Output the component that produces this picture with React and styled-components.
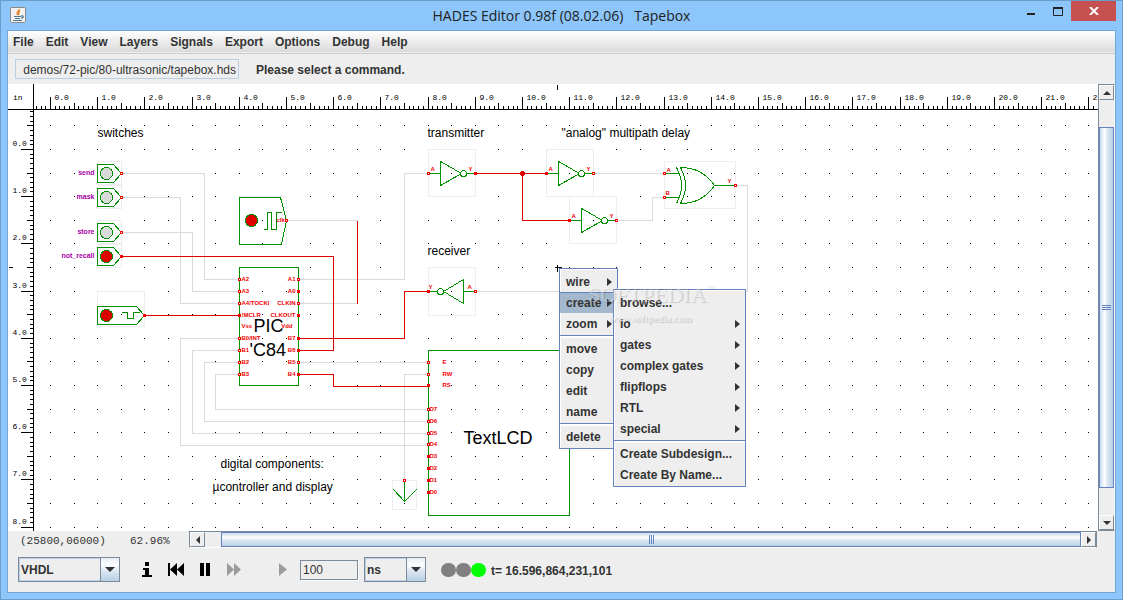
import React, { useEffect, useState } from 'react';
import styled, { createGlobalStyle } from 'styled-components';

const GlobalStyle = createGlobalStyle`
    * {
        box-sizing: border-box;
    }
    body {
        margin: 0;
        font-family: 'Liberation Sans', Arial, sans-serif;
        font-size: 12px;
        color: #333;
    }
    button, input, select {
        font: inherit;
        color: inherit;
        margin: 0;
        padding: 0;
        border: 0;
        background: none;
    }
`;

const Frame = styled.div`
    display: flex;
    flex-direction: column;
    height: 100vh;
    padding: 0 6px 6px;
    border: 1px solid #6b9dc9;
    background: #8cc6fa;
`;

const TitleBar = styled.header`
    display: grid;
    grid-template-columns: 1fr auto 1fr;
    height: 29px;
    flex: none;
`;

const AppIcon = styled.svg`
    margin: 6px 0 0 3px;
`;

const Title = styled.h1`
    margin: 0;
    font: 14px/30px 'Open Sans', sans-serif;
    color: #222;
    white-space: pre;
`;

const WindowButtons = styled.div`
    display: flex;
    justify-content: flex-end;
    align-items: flex-start;
`;

const WindowButton = styled.button`
    display: flex;
    width: ${(props) => (props.$close ? 45 : 27)}px;
    height: 20px;
    align-items: center;
    justify-content: center;
    background: ${(props) => (props.$close ? '#c75050' : 'transparent')};
`;

const Client = styled.main`
    display: flex;
    flex-direction: column;
    flex: 1;
    min-height: 0;
    border: 1px solid #74a5d4;
    background: #eee;
`;

const MenuBar = styled.nav`
    display: flex;
    flex: none;
    gap: 12px;
    height: 23px;
    padding-left: 5px;
    border-bottom: 1px solid #ccc;
    background: linear-gradient(#fff, #dadada 21px, #eee 21px);
`;

const MenuButton = styled.button`
    font-weight: bold;
    line-height: 21px;
`;

const MessageBar = styled.div`
    display: flex;
    flex: none;
    align-items: center;
    height: 30px;
    gap: 17px;
    padding-left: 7px;
    font-weight: bold;

    span {
        padding-top: 1px;
    }
`;

const PathInput = styled.input`
    width: 224px;
    height: 20px;
    padding: 1px 2px 0;
    border: 1px solid #b8cfe5;
    font-weight: normal;
    text-align: right;
`;

const Workspace = styled.div`
    display: flex;
    flex: 1;
    min-height: 0;
`;

const Sheet = styled.section`
    position: relative;
    display: grid;
    flex: 1;
    min-width: 0;
    grid-template: 26px 1fr / 26px 1fr;
    background: #fff;
    overflow: hidden;
`;

const Corner = styled.div`
    padding: 8px 0 0 5px;
    border-right: 1px solid #000;
    border-bottom: 1px solid #000;
    font: 8px/12px 'Liberation Mono', monospace;
    color: #000;
`;

const Drawing = styled.svg`
    display: block;
    width: 100%;
    height: 100%;
    min-width: 0;
    min-height: 0;
    overflow: hidden;
    fill: none;
    stroke-width: 1;
    shape-rendering: crispEdges;

    text {
        stroke: none;
    }
`;

const RulerText = styled.text`
    font: 8px 'Liberation Mono', monospace;
    fill: #000;
`;

const NoteText = styled.text`
    font-size: ${(props) => (props.$big ? 18 : 12)}px;
    fill: #000;
`;

const PinText = styled.text`
    font-size: 6px;
    font-weight: bold;
    fill: #f00000;
`;

const SignalText = styled.text`
    font-size: 7px;
    font-weight: bold;
    fill: #a800a8;
    text-anchor: end;
`;

const Menu = styled.ul`
    position: absolute;
    left: ${(props) => props.$x}px;
    top: ${(props) => props.$y}px;
    width: ${(props) => props.$w}px;
    margin: 0;
    padding: 2px 0 1px;
    list-style: none;
    border: 1px solid #6382bf;
    background: #eee;
    box-shadow: inset 1px 1px #fff;
`;

const MenuItem = styled.li`
    height: 21px;
    background: ${(props) => (props.$active ? '#a3b8cc' : 'transparent')};
    border-top: 1px solid ${(props) => (props.$active ? '#6382bf' : 'transparent')};

    button {
        display: flex;
        width: 100%;
        height: 19px;
        align-items: center;
        justify-content: space-between;
        padding: 0 5px 0 6px;
        font-weight: bold;
    }
`;

const MenuLine = styled.li`
    height: 4px;
    padding-top: 1px;

    &::before {
        content: '';
        display: block;
        height: 2px;
        border-top: 1px solid #6382bf;
        background: #fff;
    }
`;

const Watermark = styled.div`
    position: absolute;
    left: 580px;
    top: 197px;
    font: 22px/28px 'Liberation Serif', serif;
    color: rgba(255, 255, 255, 0.4);
    text-shadow: 1px 1px 1px rgba(0, 0, 0, 0.16);
    pointer-events: none;

    sup {
        font-size: 8px;
        line-height: 8px;
        vertical-align: 12px;
    }
    small {
        display: block;
        padding-left: 21px;
        font: bold 10px/20px 'Liberation Serif', serif;
    }
`;

const ScrollBar = styled.div`
    display: flex;
    flex: ${(props) => (props.$vertical ? 'none' : '1')};
    flex-direction: ${(props) => (props.$vertical ? 'column' : 'row')};
    width: ${(props) => (props.$vertical ? '17px' : 'auto')};
    height: ${(props) => (props.$vertical ? 'auto' : '17px')};
    margin-right: ${(props) => (props.$vertical ? 0 : 18)}px;
    border: 1px solid #7a8a99;
    border-right-color: ${(props) => (props.$vertical ? '#fff' : '#7a8a99')};
    border-bottom-color: ${(props) => (props.$vertical ? '#7a8a99' : '#fff')};
    background: #eee;
`;

const ScrollButton = styled.button`
    display: flex;
    flex: none;
    width: 15px;
    height: 15px;
    align-items: center;
    justify-content: center;
    border: 1px solid #7a8a99;
    border-top-color: #fff;
    border-left-color: #fff;
`;

const ScrollTrack = styled.div`
    display: flex;
    flex: 1;
    min-width: 0;
    min-height: 0;
    flex-direction: inherit;
    padding: ${(props) => (props.$vertical ? '27px 0' : '0 0 0 16px')};
`;

const ScrollThumb = styled.div`
    display: flex;
    flex: 1;
    align-items: center;
    justify-content: center;
    border: 1px solid #6382bf;
    background: linear-gradient(
        ${(props) => (props.$vertical ? '90deg' : '180deg')},
        #c8dcf0,
        #fff 35%,
        #dde8f3 55%,
        #b8cfe5
    );
`;

const StatusRow = styled.div`
    display: flex;
    flex: none;
    height: 17px;
    font: 11px/20px 'Liberation Mono', monospace;
`;

const Coordinates = styled.output`
    width: 110px;
    margin-left: 12px;
`;

const ZoomLevel = styled.output`
    width: 59px;
`;

const ControlBar = styled.footer`
    display: flex;
    flex: none;
    align-items: center;
    height: 44px;
    padding: 0 10px 1px;
    font-weight: bold;
`;

const Combo = styled.div`
    position: relative;
    width: ${(props) => props.$w}px;
    height: 25px;

    select {
        width: 100%;
        height: 100%;
        padding: 1px 20px 0 2px;
        appearance: none;
        border: 1px solid #7a8a99;
        box-shadow: inset 0 0 0 1px #b8cfe5;
        font-weight: bold;
    }
    svg {
        position: absolute;
        top: 1px;
        right: 1px;
        border-left: 1px solid #7a8a99;
        background: linear-gradient(#e4edf6, #fff 30%, #dde8f3 55%, #b8cfe5);
        pointer-events: none;
    }
`;

const Transport = styled.div`
    display: flex;
    margin: 0 3px 0 12px;
`;

const TransportButton = styled.button`
    display: flex;
    width: 29px;
    height: 24px;
    align-items: center;
    justify-content: center;
    color: ${(props) => (props.disabled ? '#9c9c9c' : '#000')};
    margin-left: ${(props) => (props.$apart ? 20 : 0)}px;
`;

const StepInput = styled.input`
    width: 58px;
    height: 20px;
    margin-right: 6px;
    padding: 0 2px;
    border: 1px solid #7a8a99;
    box-shadow: 1px 1px #fff;
    font-weight: normal;
`;

const Lights = styled.div`
    display: flex;
    margin: 0 5px 0 15px;
    padding-top: 1px;
`;

const Light = styled.span`
    width: 15px;
    height: 14px;
    border-radius: 7px;
    background: ${(props) => (props.$on ? '#0f0' : '#808080')};
`;

const SimTime = styled.output`
    padding-top: 2px;
`;

const GREEN = '#009000';
const RED = '#e00000';
const GREY = '#dadada';
const PALE = '#eee';

// one inch on the rulers, at 62.96% zoom
const INCH = 47.2;
const ORIGIN_X = 50;
const ORIGIN_Y = 149;

const at = (origin, inches) => Math.round(origin + inches * INCH);

const steps = (from, count) => Array.from({ length: count }, (_, i) => from + i);

const isHalf = (i) => i % 5 === 0;

// how many whole inches of the sheet the window shows
const visibleInches = () => ({
    across: Math.max(1, Math.ceil((window.innerWidth - 75) / INCH)),
    down: Math.max(1, Math.ceil((window.innerHeight - 219) / INCH)),
});

function TopRuler({ inches }) {
    const tick = (i) => {
        const top = i % 10 === 0 ? 96 : isHalf(i) ? 102 : 105;
        return `M${at(ORIGIN_X, i / 10)} ${top}V109`;
    };
    return (
        <Drawing aria-hidden="true">
            <g transform="translate(-33.5 -83.5)">
                <path
                    stroke="#000"
                    d={`M0 109H4000M557 84V89${steps(-3, inches * 10 + 3).map(tick).join('')}`}
                />
                {steps(0, inches).map((n) => (
                    <RulerText key={n} x={at(ORIGIN_X, n) + 4} y="99">
                        {n}.0
                    </RulerText>
                ))}
            </g>
        </Drawing>
    );
}

function LeftRuler({ inches }) {
    const tick = (i) => {
        const left = i % 10 === 0 ? 20 : isHalf(i) ? 26 : 29;
        return `M${left} ${at(ORIGIN_Y, i / 10)}H33`;
    };
    return (
        <Drawing aria-hidden="true">
            <g transform="translate(-7.5 -109.5)">
                <path
                    stroke="#000"
                    d={`M33 0V3000M8 267H12${steps(-8, inches * 10 + 8).map(tick).join('')}`}
                />
                {steps(0, inches).map((n) => (
                    <RulerText key={n} x="12" y={at(ORIGIN_Y, n) - 4}>
                        {n}.0
                    </RulerText>
                ))}
            </g>
        </Drawing>
    );
}

function Pin({ x, y, on }) {
    return (
        <rect
            x={x - 1}
            y={y - 1}
            width="2"
            height="2"
            stroke="#f00000"
            fill={on ? '#f00000' : '#fff'}
        />
    );
}

function Switch({ y, name, on }) {
    return (
        <g>
            <rect x="97" y={y - 12} width="24" height="23" stroke={PALE} />
            <path d={`M97 ${y - 9}H113L121 ${y}L113 ${y + 9}H97Z`} stroke={GREEN} />
            <circle cx="106" cy={y} r="6" stroke={GREEN} fill={on ? RED : GREY} />
            <SignalText x="94" y={y + 1}>
                {name}
            </SignalText>
            <Pin x={121} y={y} on={on} />
        </g>
    );
}

function Inverter({ x, y, on }) {
    return (
        <g transform={`translate(${x} ${y})`}>
            <rect x="0" y="-24" width="47" height="47" stroke={PALE} />
            <path d="M1 0H12M12 -12V12L33 0ZM38 0H47" stroke={GREEN} />
            <circle cx="35" cy="0" r="3" stroke={GREEN} fill="#fff" />
            <PinText x="2" y="-3">
                A
            </PinText>
            <PinText x="40" y="-3">
                Y
            </PinText>
            <Pin x={0} y={0} on={on} />
            <Pin x={47} y={0} on={x === 428} />
        </g>
    );
}

const greyWires = [
    'M122 173H204V279H238',
    'M122 197H180V303H238',
    'M122 232H192V291H238',
    'M287 220H357M357 303H299',
    'M299 279H404V173H428',
    'M299 362H428',
    'M428 374H404V480',
    'M238 338H180V445H428',
    'M238 350H192V433H428',
    'M238 362H204V421H428',
    'M238 374H215V409H428',
    'M594 173H664',
    'M618 220H652V197H664',
    'M736 185H747V291H476',
];

const redWires = [
    'M122 256H333V350H299',
    'M145 315H239',
    'M357 220V303',
    'M299 338H404V291H428',
    'M299 374H333V386H428',
    'M476 173H546',
    'M522 173V220H569',
];

const picPins = [
    { y: 279, left: 'A2', right: 'A1' },
    { y: 291, left: 'A3', right: 'A0', rightOn: true },
    { y: 303, left: 'A4/TOCKI', right: 'CLKIN' },
    { y: 315, left: '!MCLR', right: 'CLKOUT', leftOn: true, rightOn: true },
    { y: 326, left: 'Vss', right: 'Vdd', power: true },
    { y: 338, left: 'B0/INT', right: 'B7', rightOn: true },
    { y: 350, left: 'B1', right: 'B6', rightOn: true },
    { y: 362, left: 'B2', right: 'B5' },
    { y: 374, left: 'B3', right: 'B4', rightOn: true },
];

const lcdPins = [
    { y: 362, name: 'E', x: 442 },
    { y: 374, name: 'RW', x: 442 },
    { y: 385, name: 'RS', x: 442, on: true },
    { y: 409, name: 'D7' },
    { y: 421, name: 'D6' },
    { y: 433, name: 'D5' },
    { y: 444, name: 'D4' },
    { y: 456, name: 'D3', on: true },
    { y: 468, name: 'D2', on: true },
    { y: 480, name: 'D1', on: true },
    { y: 492, name: 'D0', on: true },
];

const notes = [
    { x: 97, y: 136, text: 'switches' },
    { x: 427, y: 136, text: 'transmitter' },
    { x: 561, y: 136, text: '"analog" multipath delay' },
    { x: 427, y: 254, text: 'receiver' },
    { x: 220, y: 467, text: 'digital components:' },
    { x: 212, y: 490, text: 'µcontroller and display' },
    { x: 253, y: 331, text: 'PIC', big: true },
    { x: 249, y: 355, text: "'C84", big: true },
    { x: 463, y: 443, text: 'TextLCD', big: true },
];

const gridDots = steps(0, 90)
    .map((i) =>
        steps(-1, 50)
            .map((j) => `M${at(ORIGIN_X, i / 2) - 0.5} ${at(ORIGIN_Y, j / 2)}h1`)
            .join('')
    )
    .join('');

function Schematic() {
    return (
        <Drawing role="img" aria-label="Tapebox schematic">
            <g transform="translate(-33.5 -109.5)">
                <path d={gridDots} stroke="#000" />
                <path d={greyWires.join('')} stroke={GREY} />
                <path d={redWires.join('')} stroke={RED} />

                <Switch y={173} name="send" />
                <Switch y={197} name="mask" />
                <Switch y={232} name="store" />
                <Switch y={256} name="not_recall" on />

                {/* power-on reset */}
                <rect x="97" y="291" width="47" height="35" stroke={PALE} />
                <path
                    d="M97 306H136L144 315L136 324H97ZM121 312H127V318H133V312H139"
                    stroke={GREEN}
                />
                <circle cx="106" cy="315" r="6" stroke={GREEN} fill={RED} />
                <Pin x={144} y={315} on />

                {/* clock generator */}
                <rect x="239" y="196" width="47" height="48" stroke={PALE} />
                <path
                    d="M239 197H280L286 220L281 244H239ZM263 229H267V212H271V229H276V212H281"
                    stroke={GREEN}
                />
                <circle cx="251" cy="220" r="6" stroke={GREEN} fill={RED} />
                <PinText x="276" y="221">
                    clk
                </PinText>
                <Pin x={286} y={220} />

                <rect x="239" y="267" width="59" height="118" stroke={GREEN} />
                {picPins.map((pin) => (
                    <g key={pin.y}>
                        <PinText x="241" y={pin.y + 1}>
                            {pin.left}
                        </PinText>
                        <PinText x={pin.power ? 292 : 295} y={pin.y + 1} textAnchor="end">
                            {pin.right}
                        </PinText>
                        {!pin.power && <Pin x={239} y={pin.y} on={pin.leftOn} />}
                        {!pin.power && <Pin x={298} y={pin.y} on={pin.rightOn} />}
                    </g>
                ))}

                <rect x="428" y="350" width="141" height="165" stroke={GREEN} />
                {lcdPins.map((pin) => (
                    <g key={pin.name}>
                        <Pin x={428} y={pin.y} on={pin.on} />
                        <PinText x={pin.x || 429} y={pin.y + 1}>
                            {pin.name}
                        </PinText>
                    </g>
                ))}

                <rect x="392" y="480" width="24" height="29" stroke={PALE} />
                <path d="M404 480V501M393 489L404 501L416 489" stroke={GREEN} />
                <Pin x={404} y={480} />

                <Inverter x={428} y={173} />
                <Inverter x={546} y={173} on />
                <Inverter x={569} y={220} on />
                <circle cx="522" cy="173" r="2" stroke={RED} fill={RED} />

                {/* receiver, points to the left */}
                <rect x="428" y="267" width="47" height="48" stroke={PALE} />
                <path d="M429 291H437M463 279V303L443 291ZM463 291H475" stroke={GREEN} />
                <circle cx="440" cy="291" r="3" stroke={GREEN} fill="#fff" />
                <PinText x="428" y="288">
                    Y
                </PinText>
                <PinText x="467" y="288">
                    A
                </PinText>
                <Pin x={428} y={291} on />
                <Pin x={475} y={291} />

                {/* xor gate */}
                <rect x="664" y="161" width="71" height="47" stroke={PALE} />
                <path
                    d="M665 173H679M665 197H679M714 185H735M676 167Q686 185 676 203M680 167Q690 185 680 203C695 203 706 197 714 185C706 173 695 167 680 167"
                    stroke={GREEN}
                />
                <PinText x="666" y="171">
                    A
                </PinText>
                <PinText x="665" y="194">
                    B
                </PinText>
                <PinText x="727" y="182">
                    Y
                </PinText>
                <Pin x={664} y={173} />
                <Pin x={664} y={197} />
                <Pin x={735} y={185} />

                {notes.map((note) => (
                    <NoteText key={note.text} x={note.x} y={note.y} $big={note.big}>
                        {note.text}
                    </NoteText>
                ))}

                <path d="M554 267H561M557 264V271" stroke="#000" />
            </g>
        </Drawing>
    );
}

const popupItems = ['wire>', 'create>', 'zoom>', '-', 'move', 'copy', 'edit', 'name', '-', 'delete'];

const createItems = [
    'browse...',
    'io>',
    'gates>',
    'complex gates>',
    'flipflops>',
    'RTL>',
    'special>',
    '-',
    'Create Subdesign...',
    'Create By Name...',
];

function PopupMenu({ items, x, y, w, active }) {
    return (
        <Menu $x={x} $y={y} $w={w}>
            {items.map((item, i) => {
                if (item === '-') return <MenuLine key={i} />;
                const label = item.replace('>', '');
                return (
                    <MenuItem key={i} $active={label === active}>
                        <button type="button">
                            {label}
                            {item.endsWith('>') && (
                                <svg width="5" height="8" fill="#333">
                                    <path d="M0 0L5 4L0 8Z" />
                                </svg>
                            )}
                        </button>
                    </MenuItem>
                );
            })}
        </Menu>
    );
}

const arrows = {
    up: 'M0 6L4 2L8 6Z',
    down: 'M0 2L4 6L8 2Z',
    left: 'M6 0L2 4L6 8Z',
    right: 'M2 0L6 4L2 8Z',
};

function Arrow({ to }) {
    return (
        <svg width="8" height="8" fill="#333">
            <path d={arrows[to]} />
        </svg>
    );
}

function Scroller({ vertical }) {
    return (
        <ScrollBar $vertical={vertical}>
            <ScrollButton type="button" aria-label={vertical ? 'Up' : 'Left'}>
                <Arrow to={vertical ? 'up' : 'left'} />
            </ScrollButton>
            <ScrollTrack $vertical={vertical}>
                <ScrollThumb $vertical={vertical}>
                    <svg width="9" height="9" stroke="#6382bf">
                        <path d={vertical ? 'M0 2.5H9M0 4.5H9M0 6.5H9' : 'M2.5 0V9M4.5 0V9M6.5 0V9'} />
                    </svg>
                </ScrollThumb>
            </ScrollTrack>
            <ScrollButton type="button" aria-label={vertical ? 'Down' : 'Right'}>
                <Arrow to={vertical ? 'down' : 'right'} />
            </ScrollButton>
        </ScrollBar>
    );
}

function ComboBox({ label, options, w }) {
    return (
        <Combo $w={w}>
            <select aria-label={label}>
                {options.map((option) => (
                    <option key={option}>{option}</option>
                ))}
            </select>
            <svg width="19" height="23" fill="#333">
                <path d="M4 9H14L9 14Z" />
            </svg>
        </Combo>
    );
}

const menus = ['File', 'Edit', 'View', 'Layers', 'Signals', 'Export', 'Options', 'Debug', 'Help'];

const transport = [
    { name: 'Info', d: 'M6 1h4v4h-4zM4 7h6v7h3v2h-10v-2h3v-5h-2z' },
    { name: 'Rewind', d: 'M0 2h2v13h-2zM9 2v13l-7 -6.5zM16 2v13l-7 -6.5z' },
    { name: 'Pause', d: 'M3 2h4v13h-4zM9 2h4v13h-4z' },
    { name: 'Run', d: 'M1 2l7 6.5l-7 6.5zM8 2l7 6.5l-7 6.5z', disabled: true },
    { name: 'Step', d: 'M4 2l8 6.5l-8 6.5z', disabled: true, apart: true },
];

function App() {
    const [path, setPath] = useState('demos/72-pic/80-ultrasonic/tapebox.hds');
    const [step, setStep] = useState('100');
    const [inches, setInches] = useState(visibleInches);

    useEffect(() => {
        const onResize = () => setInches(visibleInches());
        window.addEventListener('resize', onResize);
        return () => window.removeEventListener('resize', onResize);
    }, []);

    return (
        <>
            <GlobalStyle />
            <Frame>
                <TitleBar>
                    <AppIcon width="16" height="16" viewBox="0 0 16 16" fill="none">
                        <rect x="0.5" y="0.5" width="15" height="15" rx="1" fill="#f2f2f0" stroke="#8b8b8b" />
                        <path d="M9 2C10 4 6 5 7 7L8 8M10 4C8 5 8 6 9 8" stroke="#e8791c" strokeWidth="1.2" />
                        <path d="M4 9.5H11M5 11.5H10M11 9C14 8 14 11 11 11M3 13.5H12" stroke="#4f7896" strokeWidth="1.2" />
                    </AppIcon>
                    <Title>HADES Editor 0.98f (08.02.06)   Tapebox</Title>
                    <WindowButtons>
                        <WindowButton type="button" aria-label="Minimize">
                            <svg width="12" height="12">
                                <path d="M2 8H10V10H2Z" fill="#222" />
                            </svg>
                        </WindowButton>
                        <WindowButton type="button" aria-label="Maximize">
                            <svg width="12" height="12" fill="none" stroke="#222">
                                <path d="M1.5 3.5V10.5H10.5V3.5" />
                                <path d="M1 3H11" strokeWidth="2" />
                            </svg>
                        </WindowButton>
                        <WindowButton type="button" aria-label="Close" $close>
                            <svg width="10" height="8" stroke="#fff" strokeWidth="2">
                                <path d="M1 0L9 8M9 0L1 8" />
                            </svg>
                        </WindowButton>
                    </WindowButtons>
                </TitleBar>
                <Client>
                    <MenuBar>
                        {menus.map((name) => (
                            <MenuButton type="button" key={name}>
                                {name}
                            </MenuButton>
                        ))}
                    </MenuBar>
                    <MessageBar>
                        <PathInput
                            aria-label="Design"
                            value={path}
                            onChange={(e) => setPath(e.target.value)}
                        />
                        <span>Please select a command.</span>
                    </MessageBar>
                    <Workspace>
                        <Sheet>
                            <Corner>in</Corner>
                            <TopRuler inches={inches.across} />
                            <LeftRuler inches={inches.down} />
                            <Schematic />
                            <PopupMenu items={popupItems} x={551} y={184} w={59} active="create" />
                            <PopupMenu items={createItems} x={605} y={205} w={133} />
                            <Watermark aria-hidden="true">
                                SOFTPEDIA<sup>™</sup>
                                <small>www.softpedia.com</small>
                            </Watermark>
                        </Sheet>
                        <Scroller vertical />
                    </Workspace>
                    <StatusRow>
                        <Coordinates>(25800,06000)</Coordinates>
                        <ZoomLevel>62.96%</ZoomLevel>
                        <Scroller />
                    </StatusRow>
                    <ControlBar>
                        <ComboBox label="Language" options={['VHDL', 'Verilog']} w={102} />
                        <Transport>
                            {transport.map((item) => (
                                <TransportButton
                                    type="button"
                                    key={item.name}
                                    aria-label={item.name}
                                    disabled={item.disabled}
                                    $apart={item.apart}
                                >
                                    <svg width="16" height="17" fill="currentColor">
                                        <path d={item.d} />
                                    </svg>
                                </TransportButton>
                            ))}
                        </Transport>
                        <StepInput
                            aria-label="Step size"
                            value={step}
                            onChange={(e) => setStep(e.target.value)}
                        />
                        <ComboBox label="Time unit" options={['ns', 'us', 'ms']} w={62} />
                        <Lights>
                            <Light />
                            <Light />
                            <Light $on />
                        </Lights>
                        <SimTime>t= 16.596,864,231,101</SimTime>
                    </ControlBar>
                </Client>
            </Frame>
        </>
    );
}

export default App;
